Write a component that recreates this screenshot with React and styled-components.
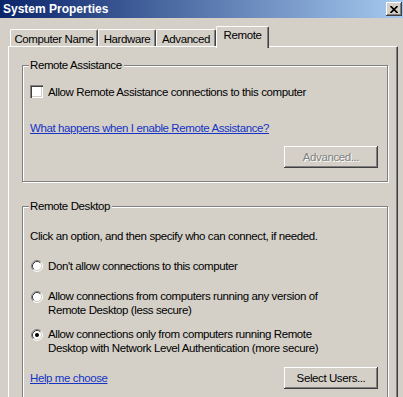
import React from "react";
import styled, { createGlobalStyle } from "styled-components";

const GlobalStyle = createGlobalStyle`
  html, body {
    margin: 0;
    padding: 0;
    background: #d4d0c8;
  }
  body {
    font-family: "Liberation Sans", Arial, sans-serif;
    font-size: 11.5px;
    letter-spacing: -0.4px;
    color: #000;
  }
`;

const Window = styled.div`
  width: 403px;
  height: 397px;
  overflow: hidden;
  background: #d4d0c8;
  display: flex;
  flex-direction: column;
`;

const TitleBar = styled.div`
  height: 18px;
  flex-shrink: 0;
  display: flex;
  align-items: center;
  justify-content: space-between;
  padding: 0 1px 0 3px;
  background: linear-gradient(to right, #0a246a, #a6caf0);
  color: #fff;
  font-weight: bold;
  font-size: 12px;
  letter-spacing: 0;
`;

const CloseButton = styled.button`
  width: 16px;
  height: 14px;
  padding: 0;
  margin: 0;
  border: none;
  background: #d4d0c8;
  box-shadow: inset -1px -1px #404040, inset 1px 1px #fff, inset -2px -2px #808080;
  display: flex;
  align-items: center;
  justify-content: center;
`;

const TabStrip = styled.div`
  display: flex;
  align-items: flex-end;
  margin: 8px 0 0 10px;
  flex-shrink: 0;
`;

const Tab = styled.div`
  width: ${(p) => p.$w}px;
  height: ${(p) => (p.$active ? 22 : 17)}px;
  margin-bottom: ${(p) => (p.$active ? -2 : 0)}px;
  position: relative;
  z-index: ${(p) => (p.$active ? 1 : 0)};
  box-sizing: border-box;
  background: #d4d0c8;
  border-top: 1px solid #fff;
  border-left: 1px solid #fff;
  border-right: 1px solid #404040;
  box-shadow: inset -1px 0 #808080;
  border-radius: 2px 2px 0 0;
  display: flex;
  justify-content: center;
  padding-top: ${(p) => (p.$active ? 1 : 2)}px;
  line-height: 14px;
`;

const Panel = styled.div`
  margin-left: 8px;
  width: 390px;
  flex: 1;
  box-sizing: border-box;
  border-top: 1px solid #fff;
  border-left: 1px solid #fff;
  border-right: 1px solid #404040;
  box-shadow: inset -1px 0 #808080;
  padding: 12px 0 0 13px;
`;

const Group = styled.fieldset`
  width: 366px;
  box-sizing: border-box;
  margin: 0 0 ${(p) => p.$mb || 0}px;
  padding: 0 9px ${(p) => p.$pb || 0}px 7px;
  border: 1px solid #808080;
  box-shadow: 1px 1px 0 #fff, inset 1px 1px 0 #fff;
  min-inline-size: 0;
`;

const Legend = styled.legend`
  padding: 0 2px 0 1px;
  margin-left: -1px;
  line-height: 13px;
  background: #d4d0c8;
`;

const Row = styled.div`
  display: flex;
  align-items: flex-start;
  gap: 5px;
  margin-top: ${(p) => p.$mt || 0}px;
  line-height: ${(p) => (p.$lh ? p.$lh : 14)}px;
`;

const Text = styled.div`
  margin-top: ${(p) => p.$mt || 0}px;
  line-height: 14px;
`;

const Link = styled.a`
  color: #1533c4;
  text-decoration: underline;
  line-height: 14px;
  cursor: pointer;
`;

const ButtonRow = styled.div`
  display: flex;
  align-items: center;
  justify-content: ${(p) => (p.$split ? "space-between" : "flex-end")};
  margin-top: ${(p) => p.$mt || 0}px;
`;

const Button = styled.button`
  width: 94px;
  height: 22px;
  box-sizing: border-box;
  border: none;
  padding: 0;
  background: #d4d0c8;
  font: inherit;
  letter-spacing: inherit;
  color: ${(p) => (p.disabled ? "#808080" : "#000")};
  text-shadow: ${(p) => (p.disabled ? "1px 1px 0 #fff" : "none")};
  box-shadow: inset -1px -1px #404040, inset 1px 1px #fff, inset -2px -2px #808080;
`;

const CheckBox = styled.span`
  width: 13px;
  height: 13px;
  flex-shrink: 0;
  box-sizing: border-box;
  background: #fff;
  box-shadow: inset 1px 1px #808080, inset 2px 2px #404040, inset -1px -1px #fff,
    inset -2px -2px #d4d0c8;
`;

const RadioBox = styled.span`
  width: 12px;
  height: 12px;
  flex-shrink: 0;
  margin: 1px 0 0 1px;
  display: block;
  svg {
    display: block;
  }
`;

const Radio = ({ checked }) => (
  <RadioBox>
    <svg width="12" height="12" viewBox="0 0 12 12">
      <circle cx="6" cy="6" r="4.5" fill="#fff" />
      <path d="M2.11 9.89 A5.5 5.5 0 0 1 9.89 2.11" stroke="#808080" fill="none" />
      <path d="M9.89 2.11 A5.5 5.5 0 0 1 2.11 9.89" stroke="#fff" fill="none" />
      <path d="M2.82 9.18 A4.5 4.5 0 0 1 9.18 2.82" stroke="#404040" fill="none" />
      <path d="M9.18 2.82 A4.5 4.5 0 0 1 2.82 9.18" stroke="#d4d0c8" fill="none" />
      {checked && <circle cx="6" cy="6" r="2" fill="#000" />}
    </svg>
  </RadioBox>
);

const tabs = [
  { label: "Computer Name", w: 88 },
  { label: "Hardware", w: 58 },
  { label: "Advanced", w: 60 },
  { label: "Remote", w: 53, active: true },
];

export default function App() {
  return (
    <>
      <GlobalStyle />
      <Window>
        <TitleBar>
          <span>System Properties</span>
          <CloseButton aria-label="Close">
            <svg width="8" height="7" viewBox="0 0 8 7">
              <path d="M0.5 0 L7.5 7 M7.5 0 L0.5 7" stroke="#000" strokeWidth="1.6" />
            </svg>
          </CloseButton>
        </TitleBar>

        <TabStrip>
          {tabs.map((t) => (
            <Tab key={t.label} $w={t.w} $active={t.active}>
              {t.label}
            </Tab>
          ))}
        </TabStrip>

        <Panel>
          <Group $mb={18} $pb={13}>
            <Legend>Remote Assistance</Legend>
            <Row $mt={13}>
              <CheckBox />
              <span>Allow Remote Assistance connections to this computer</span>
            </Row>
            <Text $mt={22}>
              <Link>What happens when I enable Remote Assistance?</Link>
            </Text>
            <ButtonRow $mt={11}>
              <Button disabled>Advanced...</Button>
            </ButtonRow>
          </Group>

          <Group $pb={20}>
            <Legend>Remote Desktop</Legend>
            <Text $mt={16}>
              Click an option, and then specify who can connect, if needed.
            </Text>
            <Row $mt={16}>
              <Radio />
              <span>Don't allow connections to this computer</span>
            </Row>
            <Row $mt={17} $lh={13.5}>
              <Radio />
              <span>
                Allow connections from computers running any version of
                <br />
                Remote Desktop (less secure)
              </span>
            </Row>
            <Row $mt={11} $lh={13.5}>
              <Radio checked />
              <span>
                Allow connections only from computers running Remote
                <br />
                Desktop with Network Level Authentication (more secure)
              </span>
            </Row>
            <ButtonRow $split $mt={12}>
              <Link>Help me choose</Link>
              <Button>Select Users...</Button>
            </ButtonRow>
          </Group>
        </Panel>
      </Window>
    </>
  );
}
